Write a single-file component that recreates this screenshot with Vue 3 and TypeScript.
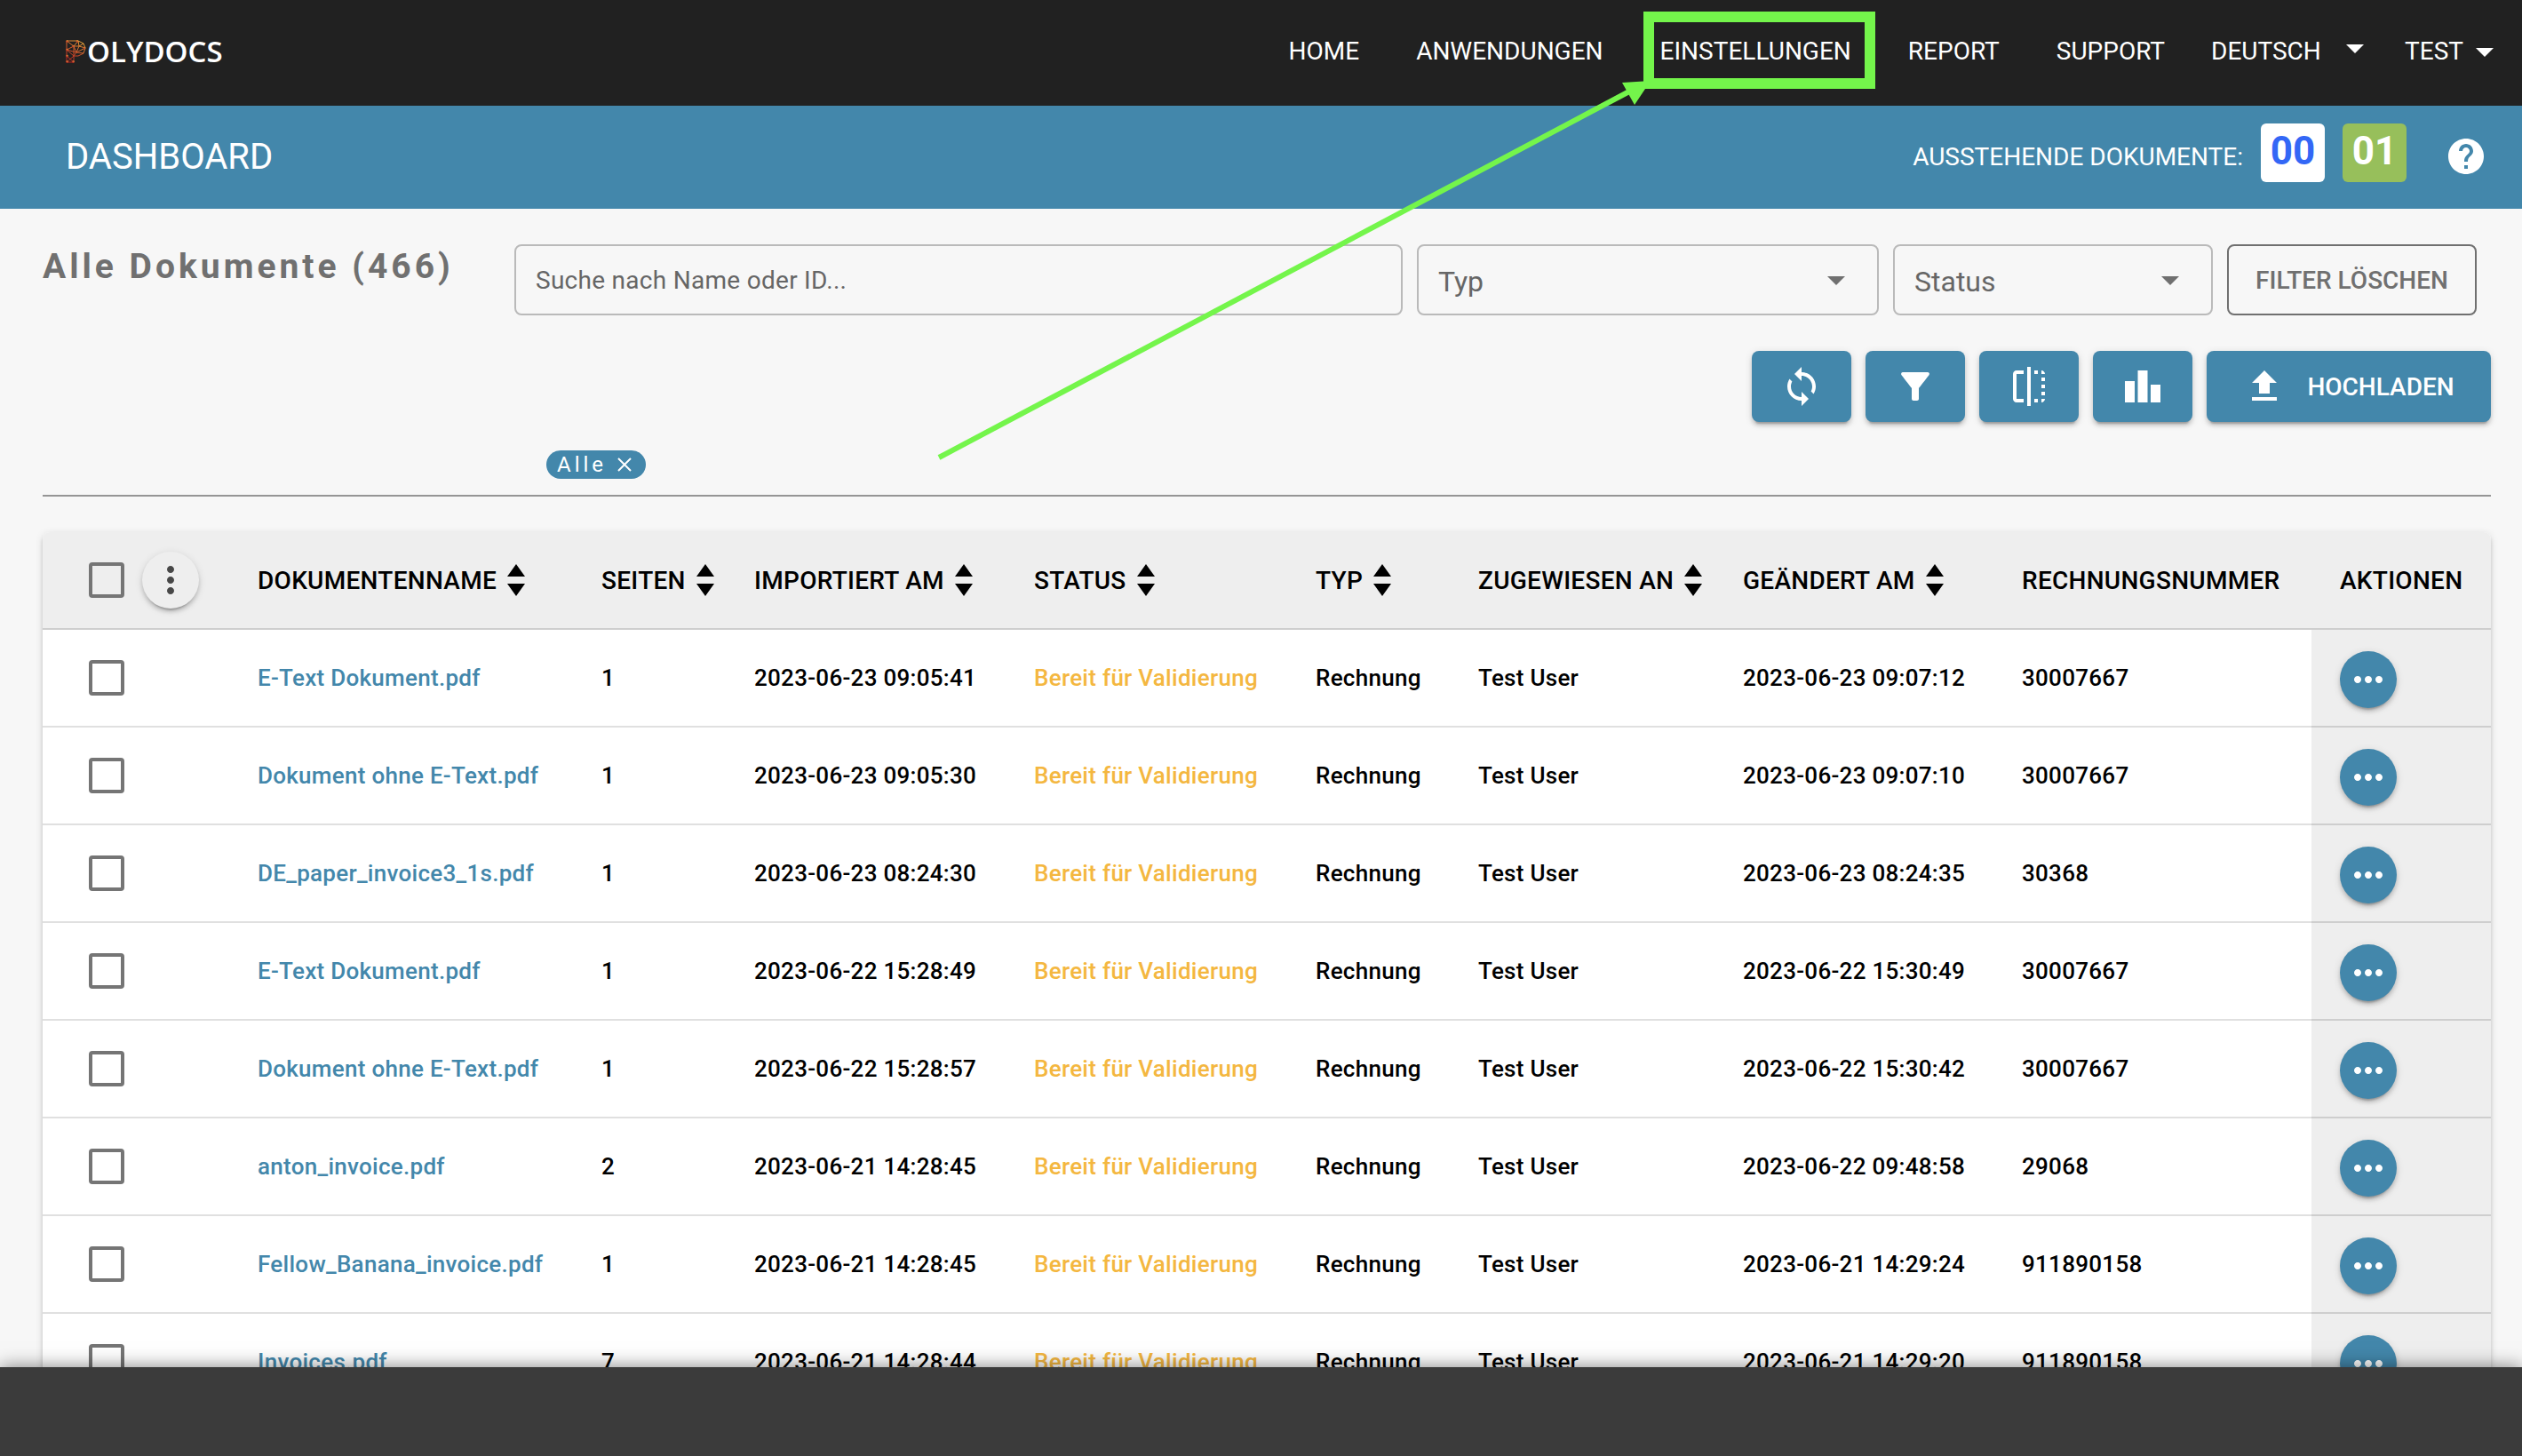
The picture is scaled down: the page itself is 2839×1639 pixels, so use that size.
<script setup lang="ts">
import { ref } from 'vue'

interface DocumentRow {
  name: string
  pages: number
  imported: string
  type: string
  assignee: string
  changed: string
  invoice: string
}

interface Column {
  label: string
  sortable: boolean
  width: number
}

const columns: Column[] = [
  { label: 'DOKUMENTENNAME', sortable: true, width: 387 },
  { label: 'SEITEN', sortable: true, width: 172 },
  { label: 'IMPORTIERT AM', sortable: true, width: 315 },
  { label: 'STATUS', sortable: true, width: 317 },
  { label: 'TYP', sortable: true, width: 183 },
  { label: 'ZUGEWIESEN AN', sortable: true, width: 298 },
  { label: 'GEÄNDERT AM', sortable: true, width: 314 },
  { label: 'RECHNUNGSNUMMER', sortable: false, width: 358 },
]

const status = 'Bereit für Validierung'

const rows: DocumentRow[] = [
  { name: 'E-Text Dokument.pdf', pages: 1, imported: '2023-06-23 09:05:41', type: 'Rechnung', assignee: 'Test User', changed: '2023-06-23 09:07:12', invoice: '30007667' },
  { name: 'Dokument ohne E-Text.pdf', pages: 1, imported: '2023-06-23 09:05:30', type: 'Rechnung', assignee: 'Test User', changed: '2023-06-23 09:07:10', invoice: '30007667' },
  { name: 'DE_paper_invoice3_1s.pdf', pages: 1, imported: '2023-06-23 08:24:30', type: 'Rechnung', assignee: 'Test User', changed: '2023-06-23 08:24:35', invoice: '30368' },
  { name: 'E-Text Dokument.pdf', pages: 1, imported: '2023-06-22 15:28:49', type: 'Rechnung', assignee: 'Test User', changed: '2023-06-22 15:30:49', invoice: '30007667' },
  { name: 'Dokument ohne E-Text.pdf', pages: 1, imported: '2023-06-22 15:28:57', type: 'Rechnung', assignee: 'Test User', changed: '2023-06-22 15:30:42', invoice: '30007667' },
  { name: 'anton_invoice.pdf', pages: 2, imported: '2023-06-21 14:28:45', type: 'Rechnung', assignee: 'Test User', changed: '2023-06-22 09:48:58', invoice: '29068' },
  { name: 'Fellow_Banana_invoice.pdf', pages: 1, imported: '2023-06-21 14:28:45', type: 'Rechnung', assignee: 'Test User', changed: '2023-06-21 14:29:24', invoice: '911890158' },
  { name: 'Invoices.pdf', pages: 7, imported: '2023-06-21 14:28:44', type: 'Rechnung', assignee: 'Test User', changed: '2023-06-21 14:29:20', invoice: '911890158' },
]

const tools = [
  { label: 'Aktualisieren', path: 'M12 4V1L8 5l4 4V6c3.31 0 6 2.69 6 6 0 1.01-.25 1.97-.7 2.8l1.46 1.46C19.54 15.03 20 13.57 20 12c0-4.42-3.58-8-8-8zm0 14c-3.31 0-6-2.69-6-6 0-1.01.25-1.97.7-2.8L5.24 7.74C4.46 8.97 4 10.43 4 12c0 4.42 3.58 8 8 8v3l4-4-4-4v3z' },
  { label: 'Filter', path: 'M4.25 5.61C6.27 8.2 10 13 10 13v6c0 .55.45 1 1 1h2c.55 0 1-.45 1-1v-6s3.72-4.8 5.74-7.39A.998.998 0 0 0 18.95 4H5.04c-.83 0-1.3.95-.79 1.61z' },
  { label: 'Spalten', path: 'M15 21h2v-2h-2v2zm4-12h2V7h-2v2zM3 5v14c0 1.1.9 2 2 2h4v-2H5V5h4V3H5c-1.100 0-2 .9-2 2zm16-2v2h2c0-1.100-.9-2-2-2zm-8 20h2V1h-2v22zm8-6h2v-2h-2v2zM15 5h2V3h-2v2zm4 8h2v-2h-2v2zm0 8c1.100 0 2-.9 2-2h-2v2z' },
  { label: 'Statistik', path: 'M7.500 21H2V9h5.500v12zm7.250-18h-5.500v18h5.500V3zM22 11h-5.500v10H22V11z' },
]

const search = ref('')
const typeFilter = ref('')
const statusFilter = ref('')
const language = ref('de')
</script>

<template>
  <div class="app">
    <header class="topbar">
      <a class="logo" href="#" aria-label="Polydocs">
        <svg class="logo-mark" viewBox="0 0 23 26" aria-hidden="true">
          <defs>
            <linearGradient id="mesh" x1="0.7" y1="0" x2="0.2" y2="1">
              <stop offset="0" stop-color="#e8a53a" />
              <stop offset="0.5" stop-color="#d0552c" />
              <stop offset="1" stop-color="#b3201f" />
            </linearGradient>
          </defs>
          <path
            d="M1 1H14L20 4L22 9L20 15L14 18H9V25H1ZM1 1L9 7V18M14 1L9 7L1 11L9 18L1 25M14 1L15 7L9 7L12 14L22 9L15 7L20 4M12 14L20 15M12 14L9 18M1 18L9 25M1 11L12 14L15 7"
            fill="none" stroke="url(#mesh)" stroke-width="1"
          />
          <g fill="url(#mesh)">
            <circle cx="1.500" cy="1.500" r="1.300" /><circle cx="13" cy="1.500" r="1.300" /><circle cx="8.500" cy="7" r="1.300" />
            <circle cx="1.500" cy="11" r="1.300" /><circle cx="1.500" cy="18" r="1.300" /><circle cx="1.500" cy="24.500" r="1.300" />
            <circle cx="8.500" cy="24.500" r="1.300" /><circle cx="21" cy="9" r="1.300" />
          </g>
        </svg>
        <span>OLYDOCS</span>
      </a>
      <nav class="nav">
        <a href="#">HOME</a>
        <a href="#">ANWENDUNGEN</a>
        <a href="#" class="highlighted">
          EINSTELLUNGEN
          <span class="marker" aria-hidden="true">
            <svg class="arrow" viewBox="0 0 810 432">
              <path d="M5 428L782 16" stroke="#74f54b" stroke-width="6" fill="none" />
              <path d="M806 4L774 6L788 31Z" fill="#74f54b" />
            </svg>
          </span>
        </a>
        <a href="#">REPORT</a>
        <a href="#">SUPPORT</a>
        <div class="language">
          <select v-model="language" aria-label="Sprache">
            <option value="de">DEUTSCH</option>
            <option value="en">ENGLISH</option>
          </select>
          <svg class="icon" viewBox="0 0 24 24" aria-hidden="true"><path d="M7 10l5 5 5-5z" /></svg>
        </div>
        <button type="button" class="user">
          TEST
          <svg class="icon" viewBox="0 0 24 24" aria-hidden="true"><path d="M7 10l5 5 5-5z" /></svg>
        </button>
      </nav>
    </header>

    <section class="titlebar">
      <h1>DASHBOARD</h1>
      <div class="pending">
        <span class="pending-label">AUSSTEHENDE DOKUMENTE:</span>
        <span class="count">00</span>
        <span class="count green">01</span>
        <button type="button" class="help" aria-label="Hilfe">
          <svg class="icon" viewBox="0 0 24 24">
            <path d="M12 2C6.480 2 2 6.480 2 12s4.480 10 10 10 10-4.480 10-10S17.520 2 12 2zm1 17h-2v-2h2v2zm2.070-7.750l-.9.920C13.450 12.900 13 13.500 13 15h-2v-.5c0-1.100.45-2.100 1.170-2.830l1.240-1.260c.37-.36.59-.86.59-1.410 0-1.100-.9-2-2-2s-2 .9-2 2H8c0-2.210 1.790-4 4-4s4 1.790 4 4c0 .88-.36 1.680-.93 2.250z" />
          </svg>
        </button>
      </div>
    </section>

    <main class="content">
      <div class="filters">
        <h2>Alle Dokumente (466)</h2>
        <input v-model="search" class="field search" type="text" placeholder="Suche nach Name oder ID..." aria-label="Suche nach Name oder ID" />
        <div class="select-box type-box">
          <select v-model="typeFilter" class="field" aria-label="Typ">
            <option value="">Typ</option>
            <option value="invoice">Rechnung</option>
          </select>
          <svg class="icon" viewBox="0 0 24 24" aria-hidden="true"><path d="M7 10l5 5 5-5z" /></svg>
        </div>
        <div class="select-box status-box">
          <select v-model="statusFilter" class="field" aria-label="Status">
            <option value="">Status</option>
            <option value="ready">Bereit für Validierung</option>
          </select>
          <svg class="icon" viewBox="0 0 24 24" aria-hidden="true"><path d="M7 10l5 5 5-5z" /></svg>
        </div>
        <button type="button" class="clear">FILTER LÖSCHEN</button>
      </div>

      <div class="tools">
        <button v-for="tool in tools" :key="tool.label" type="button" class="tool" :aria-label="tool.label">
          <svg class="icon" viewBox="0 0 24 24"><path :d="tool.path" /></svg>
        </button>
        <button type="button" class="tool upload">
          <svg class="icon" viewBox="0 0 24 24" aria-hidden="true"><path d="M5 20h14v-2H5v2zm0-10h4v6h6v-6h4l-7-7-7 7z" /></svg>
          HOCHLADEN
        </button>
      </div>

      <div class="chips">
        <button type="button" class="chip">
          Alle
          <svg viewBox="0 0 16 16" aria-hidden="true"><path d="M1 1L15 15M15 1L1 15" stroke="#fff" stroke-width="2" /></svg>
        </button>
      </div>

      <div class="card">
        <table>
          <colgroup>
            <col style="width: 210px" />
            <col v-for="column in columns" :key="column.label" :style="{ width: column.width + 'px' }" />
            <col />
          </colgroup>
          <thead>
            <tr>
              <th>
                <div class="select-all">
                  <input type="checkbox" aria-label="Alle auswählen" />
                  <button type="button" class="more" aria-label="Mehr">
                    <svg class="icon" viewBox="0 0 24 24">
                      <path d="M12 8c1.100 0 2-.9 2-2s-.9-2-2-2-2 .9-2 2 .9 2 2 2zm0 2c-1.100 0-2 .9-2 2s.9 2 2 2 2-.9 2-2-.9-2-2-2zm0 6c-1.100 0-2 .9-2 2s.9 2 2 2 2-.9 2-2-.9-2-2-2z" />
                    </svg>
                  </button>
                </div>
              </th>
              <th v-for="column in columns" :key="column.label">
                <div class="heading">
                  {{ column.label }}
                  <svg v-if="column.sortable" class="sort" viewBox="0 0 20 36" aria-hidden="true">
                    <path d="M10 0L20 14H0ZM0 22H20L10 36Z" />
                  </svg>
                </div>
              </th>
              <th>AKTIONEN</th>
            </tr>
          </thead>
          <tbody>
            <tr v-for="(row, index) in rows" :key="index">
              <td class="check"><input type="checkbox" :aria-label="row.name + ' auswählen'" /></td>
              <td><a href="#">{{ row.name }}</a></td>
              <td>{{ row.pages }}</td>
              <td>{{ row.imported }}</td>
              <td class="ready">{{ status }}</td>
              <td>{{ row.type }}</td>
              <td>{{ row.assignee }}</td>
              <td>{{ row.changed }}</td>
              <td>{{ row.invoice }}</td>
              <td class="actions">
                <button type="button" aria-label="Aktionen">
                  <svg class="icon" viewBox="0 0 24 24">
                    <path d="M6 10c-1.100 0-2 .9-2 2s.9 2 2 2 2-.9 2-2-.9-2-2-2zm12 0c-1.100 0-2 .9-2 2s.9 2 2 2 2-.9 2-2-.9-2-2-2zm-6 0c-1.100 0-2 .9-2 2s.9 2 2 2 2-.9 2-2-.9-2-2-2z" />
                  </svg>
                </button>
              </td>
            </tr>
          </tbody>
        </table>
      </div>
    </main>

    <footer class="footer"></footer>
  </div>
</template>

<style>
body {
  margin: 0;
}
</style>

<style scoped>
.app {
  --blue: #4387ab;
  --shadow: 0 6px 2px -4px rgba(0, 0, 0, 0.2), 0 4px 4px rgba(0, 0, 0, 0.14), 0 2px 10px rgba(0, 0, 0, 0.12);
  display: flex;
  flex-direction: column;
  height: 100vh;
  overflow: hidden;
  background: #f7f7f7;
  color: #000;
  font-family: Roboto, "Liberation Sans", sans-serif;
  font-size: 28px;
}

.app *,
.app *::before {
  box-sizing: border-box;
}

a {
  color: inherit;
  text-decoration: none;
}

button,
input,
select {
  font: inherit;
  color: inherit;
  margin: 0;
  border: 0;
  padding: 0;
  background: none;
}

select {
  appearance: none;
}

.icon {
  display: block;
  flex: none;
  width: 48px;
  height: 48px;
  fill: currentColor;
}

.topbar {
  display: flex;
  flex: none;
  justify-content: space-between;
  align-items: center;
  height: 119px;
  padding: 0 18px 4px 74px;
  background: #212121;
  color: #fff;
}

.logo {
  display: flex;
  align-items: center;
  gap: 1px;
  font-family: "Open Sans", "Noto Sans", sans-serif;
  font-size: 33px;
  font-weight: 600;
  line-height: 32px;
}

.logo-mark {
  width: 23px;
  height: 26px;
}

.nav {
  display: flex;
  align-items: center;
  gap: 64px;
  line-height: 32px;
}

.highlighted {
  position: relative;
}

.marker {
  position: absolute;
  inset: -29px -27px -26px -19px;
  z-index: 2;
  border: 12px solid #74f54b;
  pointer-events: none;
}

.arrow {
  position: absolute;
  top: 62px;
  right: 100%;
  width: 810px;
  height: 432px;
}

.language {
  position: relative;
  display: flex;
  align-items: center;
  width: 186px;
  margin-left: -12px;
}

.language select {
  width: 100%;
  line-height: 32px;
}

.language .icon {
  position: absolute;
  right: 0;
  bottom: -4px;
}

.user {
  display: flex;
  align-items: center;
  margin-left: -32px;
}

.titlebar {
  display: flex;
  flex: none;
  justify-content: space-between;
  align-items: center;
  height: 116px;
  padding: 0 39px 2px 74px;
  background: var(--blue);
  color: #fff;
}

h1 {
  margin: 0;
  font-size: 40px;
  font-weight: 400;
}

.pending {
  display: flex;
  align-items: center;
}

.pending-label {
  margin-right: 20px;
}

.count {
  width: 72px;
  height: 66px;
  margin-right: 20px;
  margin-bottom: 8px;
  border-radius: 6px;
  background: #fff;
  color: #3367f6;
  font-size: 44px;
  font-weight: 700;
  line-height: 62px;
  text-align: center;
}

.green {
  margin-right: 43px;
  background: #97bf5b;
  color: #fff;
}

.content {
  flex: 1;
  min-height: 0;
  padding: 40px 35px 0 48px;
}

.filters {
  display: flex;
  gap: 16px;
  padding-right: 16px;
}

h2 {
  width: 515px;
  margin: 0;
  color: #707070;
  font-size: 39px;
  font-weight: 700;
  line-height: 50px;
  letter-spacing: 4px;
}

.field {
  height: 80px;
  border: 2px solid #bababa;
  border-radius: 8px;
  color: #666;
}

.search {
  flex: 1;
  min-width: 0;
  padding: 0 22px;
  letter-spacing: 0.01em;
}

.search::placeholder {
  color: #666;
  opacity: 1;
}

.select-box {
  position: relative;
}

.select-box .field {
  width: 100%;
  padding: 4px 22px 0;
  font-size: 32px;
}

.select-box .icon {
  position: absolute;
  top: 16px;
  right: 24px;
  color: #707070;
  pointer-events: none;
}

.type-box {
  width: 520px;
}

.status-box {
  width: 360px;
}

.clear {
  width: 281px;
  height: 80px;
  border: 2px solid #707070;
  border-radius: 8px;
  color: #707070;
  font-weight: 500;
}

.tools {
  display: flex;
  justify-content: flex-end;
  gap: 16px;
  margin-top: 40px;
}

.tool {
  display: flex;
  justify-content: center;
  align-items: center;
  width: 112px;
  height: 80px;
  border-radius: 8px;
  background: var(--blue);
  box-shadow: var(--shadow);
  color: #fff;
  font-weight: 500;
}

.upload {
  gap: 24px;
  width: 320px;
}

.chips {
  padding: 32px 0 18px 567px;
  border-bottom: 2px solid #959595;
}

.chip {
  display: flex;
  align-items: center;
  gap: 12px;
  height: 32px;
  padding: 0 16px 0 12px;
  border-radius: 16px;
  background: var(--blue);
  color: #fff;
  font-size: 24px;
  letter-spacing: 4px;
}

.chip svg {
  width: 16px;
  height: 16px;
}

.card {
  margin-top: 40px;
  border-radius: 8px;
  background: #fff;
  box-shadow: var(--shadow);
}

table {
  width: 100%;
  table-layout: fixed;
  border-collapse: separate;
  border-spacing: 0;
  letter-spacing: 0.01em;
}

th,
td {
  height: 110px;
  padding: 0 0 0 32px;
  border-bottom: 2px solid #e0e0e0;
  font-weight: 500;
  text-align: left;
  white-space: nowrap;
}

th {
  border-color: #cecece;
  background: #eee;
}

th:first-child {
  border-top-left-radius: 8px;
}

th:last-child {
  border-top-right-radius: 8px;
}

th:first-child,
td:first-child {
  padding-left: 52px;
}

td {
  font-size: 26px;
}

td a {
  color: var(--blue);
}

.ready {
  color: #f4b740;
}

.heading {
  display: flex;
  align-items: center;
  gap: 12px;
}

.sort {
  width: 20px;
  height: 36px;
}

input[type="checkbox"] {
  display: block;
  appearance: none;
  width: 40px;
  height: 40px;
  border: 4px solid #757575;
  border-radius: 4px;
}

.select-all {
  display: flex;
  align-items: center;
  gap: 20px;
}

.more,
.actions button {
  display: flex;
  justify-content: center;
  align-items: center;
  width: 64px;
  height: 64px;
  border-radius: 50%;
  box-shadow: var(--shadow);
}

.more {
  background: #eee;
  color: #474747;
}

.actions {
  padding-top: 4px;
  border-color: #cecece;
  background: #eee;
}

.actions button {
  background: var(--blue);
  color: #fff;
}

.actions .icon {
  width: 48px;
  height: 48px;
}

.footer {
  position: relative;
  z-index: 1;
  flex: none;
  height: 100px;
  background: #3b3b3b;
  box-shadow: 0 0 20px rgba(0, 0, 0, 0.5);
}
</style>
